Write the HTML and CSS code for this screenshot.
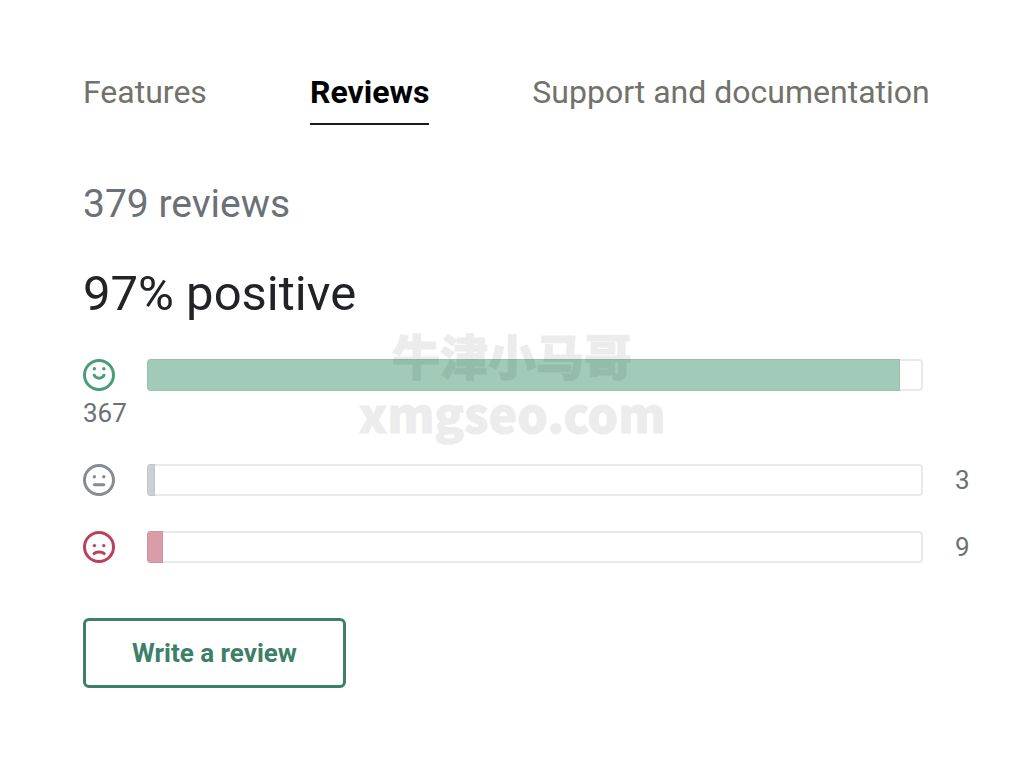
FILE: index.html
```html
<!DOCTYPE html>
<html lang="en">
<head>
    <meta charset="UTF-8">
    <meta name="viewport" content="width=device-width, initial-scale=1.0">
    <title>Reviews</title>
    <link rel="stylesheet" href="styles.css">
</head>
<body>
    <nav class="tabs">
        <a href="#features">Features</a>
        <a href="#reviews" class="active" aria-current="page">Reviews</a>
        <a href="#support">Support and documentation</a>
    </nav>

    <main class="reviews" id="reviews">
        <h3 class="total">379 reviews</h3>
        <h2 class="score">97% positive</h2>

        <div class="ratings">
            <div class="rating positive">
                <svg class="face" viewBox="0 0 32 32" role="img" aria-label="Positive">
                    <circle cx="16" cy="16" r="14.5"/>
                    <circle class="eye" cx="11.4" cy="9.8" r="1.7"/>
                    <circle class="eye" cx="20.8" cy="9.8" r="1.7"/>
                    <path d="M11.2 16.2C13.2 20.2 19 20.2 21 16.2"/>
                </svg>
                <div class="bar"><div class="fill" style="width: 97%"></div></div>
                <span class="count">367</span>
            </div>
            <div class="rating neutral">
                <svg class="face" viewBox="0 0 32 32" role="img" aria-label="Neutral">
                    <circle cx="16" cy="16" r="14.5"/>
                    <circle class="eye" cx="11.4" cy="12.8" r="1.7"/>
                    <circle class="eye" cx="20.8" cy="12.8" r="1.7"/>
                    <path d="M11.4 20.7H20.8"/>
                </svg>
                <div class="bar"><div class="fill" style="width: 1%"></div></div>
                <span class="count">3</span>
            </div>
            <div class="rating negative">
                <svg class="face" viewBox="0 0 32 32" role="img" aria-label="Negative">
                    <circle cx="16" cy="16" r="14.5"/>
                    <circle class="eye" cx="11.4" cy="14.6" r="1.7"/>
                    <circle class="eye" cx="20.8" cy="14.6" r="1.7"/>
                    <path d="M11 22.6C13.4 20.4 18.8 20.4 21.2 22.6"/>
                </svg>
                <div class="bar"><div class="fill" style="width: 2%"></div></div>
                <span class="count">9</span>
            </div>
        </div>

        <button type="button" class="write">Write a review</button>
    </main>

    <div class="watermark">
        <div class="wm-name" lang="zh">牛津小马哥</div>
        <div class="wm-site">xmgseo.com</div>
    </div>
</body>
</html>
```
FILE: styles.css
```css
*{
    box-sizing: border-box;
}
body{
    position: relative;
    margin: 0;
    padding: 72px 52px 72px 83px;
    background: #fff;
    color: #6b7177;
    font-family: Roboto, "Liberation Sans", sans-serif;
}
.tabs{
    display: flex;
    flex-wrap: wrap;
    gap: 103px;
    font-size: 32px;
    line-height: 40px;
}
.tabs a{
    padding-bottom: 11px;
    border-bottom: 2px solid transparent;
    color: #72726a;
    text-decoration: none;
}
.tabs .active{
    border-color: #1b1b1f;
    color: #000;
    font-weight: bold;
}
.total{
    margin: 53px 0 0;
    font-size: 39px;
    line-height: 52px;
    font-weight: normal;
}
.score{
    margin: 31px 0 32px;
    color: #212326;
    font-size: 49px;
    line-height: 66px;
    font-weight: normal;
}

/* the count drops under the face when it has no room after the bar */
.ratings{
    display: flex;
    flex-direction: column;
    gap: 35px;
}
.rating{
    display: flex;
    flex-wrap: wrap;
    align-items: center;
    column-gap: 32px;
    row-gap: 6px;
}
.face{
    width: 32px;
    height: 32px;
    fill: none;
    stroke: currentColor;
    stroke-width: 3;
    stroke-linecap: round;
}
.face .eye{
    fill: currentColor;
    stroke: none;
}
.bar{
    width: calc(100% - 113px);
    height: 32px;
    border-radius: 4px;
    overflow: hidden;
    box-shadow: inset 0 0 0 2px #e8e9ea;
}
.fill{
    height: 100%;
    box-shadow: inset 0 0 0 1px rgba(0,0,0,.05);
}
.count{
    color: #6b7177;
    font-size: 26px;
    line-height: 32px;
}
.positive{
    color: #479e78;
}
.positive .fill{
    background: #a1cbb8;
}
.neutral{
    color: #858c93;
}
.neutral .fill{
    background: #cbd0d5;
}
.negative{
    color: #bd4059;
}
.negative .fill{
    background: #d99ca9;
}

.write{
    margin-top: 55px;
    padding: 0 46px;
    height: 70px;
    border: 3px solid #3c8067;
    border-radius: 6px;
    background: #fff;
    color: #3c8067;
    font-family: inherit;
    font-size: 26px;
    font-weight: bold;
}

.watermark{
    position: absolute;
    top: 325px;
    left: 0;
    right: 0;
    color: #000;
    font-family: "Noto Sans CJK SC", sans-serif;
    font-size: 48px;
    line-height: 58px;
    font-weight: 900;
    text-align: center;
    -webkit-text-stroke: 1px #000;
    opacity: .07;
    pointer-events: none;
}
```
